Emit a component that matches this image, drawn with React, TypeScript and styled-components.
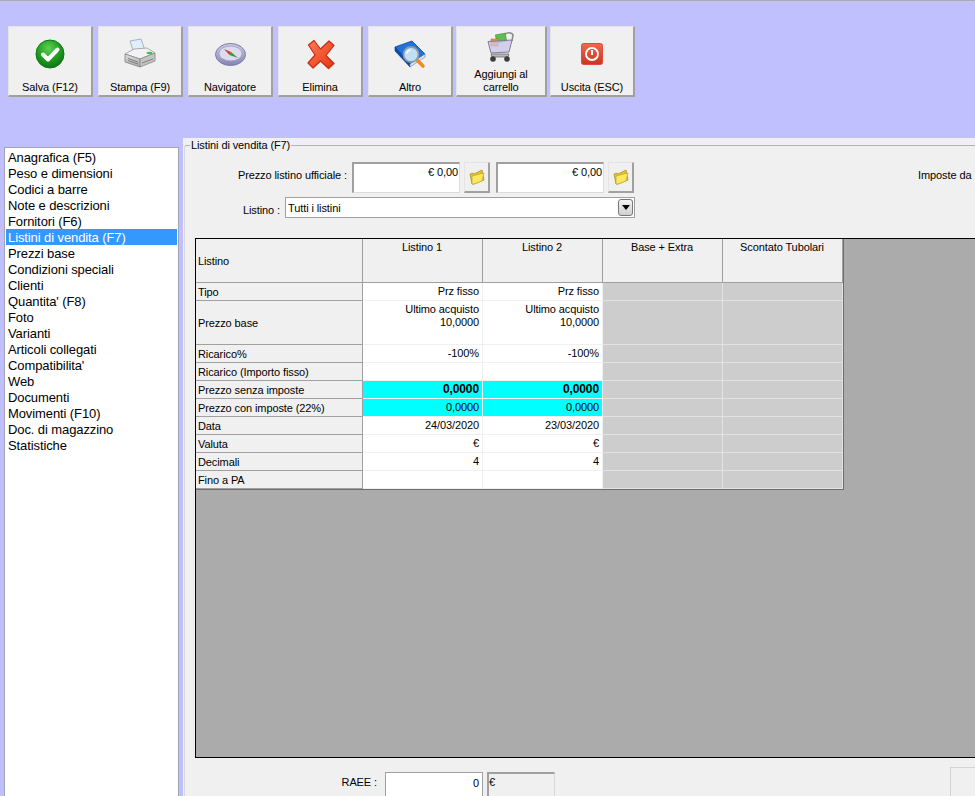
import React from "react";
import styled, { createGlobalStyle } from "styled-components";

const GlobalStyle = createGlobalStyle`
    html, body {
        margin: 0;
        padding: 0;
        background: #c0c0ff;
    }
    body {
        font-family: "Liberation Sans", Arial, sans-serif;
        font-size: 11px;
        letter-spacing: -0.1px;
        color: #000;
    }
`

const Wrapper = styled.div`
    width: 975px;
    height: 796px;
    display: flex;
    flex-direction: column;
    overflow: hidden;
    background: #c0c0ff;
    border-top: 1px solid #a9a9b4;
    box-sizing: border-box;
`
const Toolbar = styled.div`
    flex: none;
    height: 137px;
    box-sizing: border-box;
    padding: 25px 0 0 8px;
    display: flex;
    align-items: flex-start;
`
const ToolButton = styled.div<{ $width: number; $gap: number }>`
    width: ${(p) => p.$width}px;
    height: 71px;
    margin-right: ${(p) => p.$gap}px;
    box-sizing: border-box;
    display: flex;
    flex-direction: column;
    align-items: center;
    padding-bottom: 1px;
    background: #f0f0f0;
    border: 1px solid #e4e4e4;
    border-right: 2px solid #a0a0a0;
    border-bottom: 2px solid #a0a0a0;
    line-height: 13px;
    text-align: center;
`
const ToolIcon = styled.div`
    flex: 1;
    display: flex;
    align-items: center;
    justify-content: center;
`
const ToolLabel = styled.div`
    white-space: pre-line;
`
const Body = styled.div`
    flex: 1;
    min-height: 0;
    display: flex;
    padding-left: 4px;
`
const SideList = styled.div`
    flex: none;
    width: 175px;
    margin: 9px 4px 0 0;
    padding: 1px 1px 0;
    box-sizing: border-box;
    background: #fff;
    border: 1px solid #a3a3b8;
    border-bottom: none;
    font-size: 13px;
    letter-spacing: -0.1px;
`
const SideItem = styled.div<{ $active?: boolean }>`
    height: 16px;
    line-height: 17px;
    padding-left: 2px;
    white-space: nowrap;
    background: ${(p) => (p.$active ? "#3399ff" : "transparent")};
    color: ${(p) => (p.$active ? "#fff" : "#000")};
`
const Panel = styled.div`
    flex: 1;
    min-width: 0;
    background: #f0f0f0;
    overflow: hidden;
`
const Group = styled.fieldset`
    margin: 0 0 0 1px;
    padding: 0;
    min-width: 0;
    width: 900px;
    height: 658px;
    box-sizing: border-box;
    border: none;
    border-top: 1px solid #b4b4b4;
    border-left: 1px solid #d8d8d8;
    border-top-left-radius: 3px;
`
const GroupTitle = styled.legend`
    margin-left: 5px;
    padding: 0 1px;
    height: 14px;
    line-height: 14px;
`
const FieldRow = styled.div<{ $top: number }>`
    display: flex;
    align-items: flex-start;
    margin-top: ${(p) => p.$top}px;
`
const FieldLabel = styled.div<{ $width: number; $top: number }>`
    flex: none;
    width: ${(p) => p.$width}px;
    margin: ${(p) => p.$top}px 5px 0 0;
    text-align: right;
    white-space: nowrap;
    line-height: 14px;
`
const SunkenInput = styled.div`
    flex: none;
    width: 108px;
    height: 31px;
    box-sizing: border-box;
    padding: 1px 1px 0 0;
    background: #fff;
    border: 1px solid #dcdcdc;
    border-top: 2px solid #a0a0a0;
    border-left: 2px solid #a0a0a0;
    text-align: right;
    line-height: 14px;
`
const FolderButton = styled.div`
    flex: none;
    width: 26px;
    height: 31px;
    margin: 0 6px 0 4px;
    box-sizing: border-box;
    display: flex;
    align-items: center;
    justify-content: center;
    border: 1px solid #e4e4e4;
    border-right: 2px solid #a0a0a0;
    border-bottom: 2px solid #a0a0a0;
`
const Tax = styled.div`
    flex: none;
    margin: 6px 0 0 278px;
    white-space: nowrap;
    line-height: 14px;
`
const Select = styled.div`
    flex: none;
    width: 350px;
    height: 21px;
    box-sizing: border-box;
    display: flex;
    align-items: center;
    justify-content: space-between;
    padding: 0 1px 0 2px;
    background: #fff;
    border: 1px solid #a0a0a0;
`
const SelectArrow = styled.div`
    width: 15px;
    height: 17px;
    box-sizing: border-box;
    display: flex;
    align-items: center;
    justify-content: center;
    background: linear-gradient(#f4f4f4, #cfcfcf);
    border: 1px solid #777;
    border-radius: 3px;
    &::after {
        content: "";
        border-left: 4px solid transparent;
        border-right: 4px solid transparent;
        border-top: 5px solid #000;
    }
`
const SheetArea = styled.div`
    width: 790px;
    height: 520px;
    margin: 20px 0 0 10px;
    box-sizing: border-box;
    background: #ababab;
    border: 1px solid #000;
`
const Sheet = styled.div`
    display: inline-grid;
    grid-template-columns: 167px 120px 120px 120px 120px;
    grid-template-rows: 44px 18px 44px repeat(8, 18px);
    background: #f0f0f0;
    border-bottom: 1px solid #6e6e6e;
    border-right: 1px solid #6e6e6e;
`
const Cell = styled.div<{ $kind: "head" | "label" | "data" | "cyan" | "off"; $bold?: boolean }>`
    box-sizing: border-box;
    padding: 0 3px 0 2px;
    line-height: 13px;
    white-space: pre-line;
    overflow: hidden;
    font-weight: ${(p) => (p.$bold ? 700 : 400)};
    font-size: ${(p) => (p.$bold ? "12px" : "11px")};
    ${(p) => {
        switch (p.$kind) {
            case "head":
                return `background:#f0f0f0;border-right:1px solid #a0a0a0;border-bottom:1px solid #a0a0a0;text-align:center;padding-top:2px;`
            case "label":
                return `background:#f0f0f0;border-right:1px solid #a0a0a0;border-bottom:1px solid #a0a0a0;display:flex;align-items:center;padding-top:2px;`
            case "cyan":
                return `background:#00ffff;border-right:1px solid #f0f0f0;border-bottom:1px solid #f0f0f0;text-align:right;padding-top:2px;`
            case "off":
                return `background:#cdcdcd;border-right:1px solid #e2e2e2;border-bottom:1px solid #e2e2e2;`
            default:
                return `background:#fff;border-right:1px solid #f0f0f0;border-bottom:1px solid #f0f0f0;text-align:right;padding-top:2px;`
        }
    }}
`
const BottomRow = styled.div`
    display: flex;
    align-items: flex-start;
    margin-top: 14px;
    height: 30px;
`
const RaeeLabel = styled.div`
    flex: none;
    width: 192px;
    margin: 3px 8px 0 0;
    text-align: right;
    line-height: 14px;
`
const RaeeValue = styled.div`
    flex: none;
    width: 98px;
    height: 30px;
    box-sizing: border-box;
    padding: 3px 3px 0 0;
    background: #fff;
    border: 1px solid #a0a0a0;
    text-align: right;
    line-height: 14px;
`
const RaeeUnit = styled.div`
    flex: none;
    width: 68px;
    height: 30px;
    margin-left: 4px;
    box-sizing: border-box;
    padding: 1px 0 0 0;
    border: 1px solid #d8d8d8;
    border-top: 2px solid #a0a0a0;
    border-left: 2px solid #a0a0a0;
    line-height: 14px;
`
const CornerBox = styled.div`
    flex: none;
    width: 40px;
    height: 30px;
    margin: -5px 0 0 395px;
    box-sizing: border-box;
    border: 1px solid #d4d4d4;
`

const SaveIcon = () => (
    <svg width="30" height="30" viewBox="0 0 30 30">
        <defs>
            <radialGradient id="sv" cx="45%" cy="30%" r="75%">
                <stop offset="0" stopColor="#5fd052" />
                <stop offset="0.55" stopColor="#1f9d1f" />
                <stop offset="1" stopColor="#0b6f10" />
            </radialGradient>
        </defs>
        <circle cx="15" cy="15" r="14" fill="url(#sv)" stroke="#0d7a14" />
        <path d="M8 15.5l5 5 9.5-10" fill="none" stroke="#fff" strokeWidth="4" strokeLinecap="round" strokeLinejoin="round" />
    </svg>
)
const PrintIcon = () => (
    <svg width="40" height="36" viewBox="0 0 40 36">
        <defs>
            <linearGradient id="pr" x1="0" y1="0" x2="0" y2="1">
                <stop offset="0" stopColor="#dedede" />
                <stop offset="1" stopColor="#a9a9a9" />
            </linearGradient>
        </defs>
        <path d="M10 5L21 3l3.500 10L14 17z" fill="#e3eefb" stroke="#8ea6c4" strokeWidth="0.8" />
        <path d="M5 18l9-5 13-1 8 5-15 6z" fill="#f2f2f2" stroke="#999" strokeWidth="0.8" />
        <path d="M5 18l15 5v8L5 26z" fill="url(#pr)" stroke="#858585" strokeWidth="0.8" />
        <path d="M20 23l15-6v8l-15 6z" fill="#c4c4c4" stroke="#858585" strokeWidth="0.8" />
        <path d="M8 22.500l10 3.500M8 24.500l10 3.500M22 27l11-4" stroke="#6f6f6f" strokeWidth="0.8" fill="none" />
        <ellipse cx="29.500" cy="17" rx="3" ry="1.300" fill="#43c047" />
    </svg>
)
const CompassIcon = () => (
    <svg width="31" height="23" viewBox="0 0 31 23">
        <defs>
            <linearGradient id="cp" x1="0" y1="0" x2="0" y2="1">
                <stop offset="0" stopColor="#cfcfe8" />
                <stop offset="1" stopColor="#8484b4" />
            </linearGradient>
        </defs>
        <ellipse cx="15.500" cy="11.500" rx="15" ry="11" fill="url(#cp)" stroke="#7a7aa5" />
        <ellipse cx="15.500" cy="10.500" rx="11.500" ry="7.500" fill="#dcdcee" stroke="#9090b8" strokeWidth="0.7" />
        <path d="M9 6l7 3-1.500 3z" fill="#d93a22" />
        <path d="M16 9l7 6-8.500-3z" fill="#2f9a3a" />
    </svg>
)
const DeleteIcon = () => (
    <svg width="40" height="36" viewBox="0 0 40 36">
        <defs>
            <linearGradient id="dl" x1="0" y1="0" x2="1" y2="1">
                <stop offset="0" stopColor="#ff7e58" />
                <stop offset="1" stopColor="#e6320f" />
            </linearGradient>
        </defs>
        <path
            d="M8.500 9L14 4.500 20.500 13 29 5l5 4.500-8 10 8 8-5.500 5-8-7.500-7.500 7-5-5 7-8z"
            fill="url(#dl)"
            stroke="#c62c10"
            strokeWidth="1.200"
            strokeLinejoin="round"
        />
    </svg>
)
const BookIcon = () => (
    <svg width="40" height="36" viewBox="0 2 40 36">
        <path d="M5 13l17-6 13 13-15 10z" fill="#1f74dc" stroke="#12439a" strokeWidth="0.8" />
        <path d="M5 13l15 17v3L5 17z" fill="#0e4cae" stroke="#0d3a85" strokeWidth="0.6" />
        <path d="M20 30l15-10v3L20 33z" fill="#dfe8f5" stroke="#5a7ab0" strokeWidth="0.6" />
        <path d="M27 26l6 6" stroke="#f08a24" strokeWidth="3.600" strokeLinecap="round" />
        <circle cx="21" cy="20.500" r="7.500" fill="#bfe0f5" stroke="#8b9aa8" strokeWidth="1.800" />
        <path d="M16.500 19.500a5 5 0 0 1 4-3.500" stroke="#fff" strokeWidth="1.400" fill="none" />
    </svg>
)
const CartIcon = () => (
    <svg width="40" height="36" viewBox="2 2 40 36">
        <path d="M25 7c2-3 8-3 9 0l-1 6" fill="none" stroke="#8c8c8c" strokeWidth="1.600" />
        <rect x="17" y="6" width="10" height="8" fill="#5cc04a" stroke="#3f8f33" strokeWidth="0.6" transform="rotate(-10 22 10)" />
        <rect x="12" y="11" width="7" height="7" fill="#ef9440" stroke="#c96f20" strokeWidth="0.6" />
        <path d="M9 13.500l24-1.500-3 12-18 1z" fill="#c9c4ea" fillOpacity="0.75" stroke="#7d7a9c" />
        <path d="M12 26h18l-1 3H13z" fill="#b8b8b8" stroke="#6f6f6f" strokeWidth="0.8" />
        <circle cx="14" cy="31" r="2.800" fill="#3d3d3d" />
        <circle cx="28" cy="31" r="2.800" fill="#3d3d3d" />
    </svg>
)
const ExitIcon = () => (
    <svg width="22" height="22" viewBox="0 0 22 22">
        <defs>
            <linearGradient id="ex" x1="0" y1="0" x2="0" y2="1">
                <stop offset="0" stopColor="#ee6a50" />
                <stop offset="1" stopColor="#c9351f" />
            </linearGradient>
        </defs>
        <rect x="0.500" y="0.500" width="21" height="21" rx="2" fill="url(#ex)" stroke="#d9503a" />
        <circle cx="11" cy="11" r="6" fill="none" stroke="#fff" strokeWidth="1.800" />
        <path d="M11 7v5" stroke="#fff" strokeWidth="2" />
    </svg>
)
const FolderIcon = () => (
    <svg width="16" height="16" viewBox="0 0 16 16">
        <path d="M1 5l3-1 1 1 8-4 2 10-10 4H3z" fill="#e6c22e" stroke="#a38a1e" strokeWidth="0.7" />
        <path d="M3 7l12-3-2 8-8 3H3z" fill="#fde95f" stroke="#b39c22" strokeWidth="0.6" />
    </svg>
)

const toolButtons = [
    { label: "Salva (F12)", width: 85, gap: 5, icon: <SaveIcon /> },
    { label: "Stampa (F9)", width: 85, gap: 5, icon: <PrintIcon /> },
    { label: "Navigatore", width: 85, gap: 5, icon: <CompassIcon /> },
    { label: "Elimina", width: 85, gap: 5, icon: <DeleteIcon /> },
    { label: "Altro", width: 85, gap: 3, icon: <BookIcon /> },
    { label: "Aggiungi al\ncarrello", width: 91, gap: 3, icon: <CartIcon /> },
    { label: "Uscita (ESC)", width: 85, gap: 0, icon: <ExitIcon /> },
]

const sections = [
    "Anagrafica (F5)",
    "Peso e dimensioni",
    "Codici a barre",
    "Note e descrizioni",
    "Fornitori (F6)",
    "Listini di vendita (F7)",
    "Prezzi base",
    "Condizioni speciali",
    "Clienti",
    "Quantita' (F8)",
    "Foto",
    "Varianti",
    "Articoli collegati",
    "Compatibilita'",
    "Web",
    "Documenti",
    "Movimenti (F10)",
    "Doc. di magazzino",
    "Statistiche",
]

const rows: { label: string; a: string; b: string; cyan?: boolean; bold?: boolean }[] = [
    { label: "Tipo", a: "Prz fisso", b: "Prz fisso" },
    { label: "Prezzo base", a: "Ultimo acquisto\n10,0000", b: "Ultimo acquisto\n10,0000" },
    { label: "Ricarico%", a: "-100%", b: "-100%" },
    { label: "Ricarico (Importo fisso)", a: "", b: "" },
    { label: "Prezzo senza imposte", a: "0,0000", b: "0,0000", cyan: true, bold: true },
    { label: "Prezzo con imposte (22%)", a: "0,0000", b: "0,0000", cyan: true },
    { label: "Data", a: "24/03/2020", b: "23/03/2020" },
    { label: "Valuta", a: "€", b: "€" },
    { label: "Decimali", a: "4", b: "4" },
    { label: "Fino a PA", a: "", b: "" },
]

const App = () => {
    return (
        <Wrapper>
            <GlobalStyle />
            <Toolbar>
                {toolButtons.map((b) => (
                    <ToolButton key={b.label} $width={b.width} $gap={b.gap}>
                        <ToolIcon>{b.icon}</ToolIcon>
                        <ToolLabel>{b.label}</ToolLabel>
                    </ToolButton>
                ))}
            </Toolbar>
            <Body>
                <SideList>
                    {sections.map((s) => (
                        <SideItem key={s} $active={s === "Listini di vendita (F7)"}>
                            {s}
                        </SideItem>
                    ))}
                </SideList>
                <Panel>
                    <Group>
                        <GroupTitle>Listini di vendita (F7)</GroupTitle>
                        <FieldRow $top={10}>
                            <FieldLabel $width={162} $top={6}>Prezzo listino ufficiale :</FieldLabel>
                            <SunkenInput>€ 0,00</SunkenInput>
                            <FolderButton><FolderIcon /></FolderButton>
                            <SunkenInput>€ 0,00</SunkenInput>
                            <FolderButton><FolderIcon /></FolderButton>
                            <Tax>Imposte da</Tax>
                        </FieldRow>
                        <FieldRow $top={4}>
                            <FieldLabel $width={95} $top={6}>Listino :</FieldLabel>
                            <Select>
                                Tutti i listini
                                <SelectArrow />
                            </Select>
                        </FieldRow>
                        <SheetArea>
                            <Sheet>
                                <Cell $kind="label">Listino</Cell>
                                <Cell $kind="head">Listino 1</Cell>
                                <Cell $kind="head">Listino 2</Cell>
                                <Cell $kind="head">Base + Extra</Cell>
                                <Cell $kind="head">Scontato Tubolari</Cell>
                                {rows.map((r) => (
                                    <React.Fragment key={r.label}>
                                        <Cell $kind="label">{r.label}</Cell>
                                        <Cell $kind={r.cyan ? "cyan" : "data"} $bold={r.bold}>{r.a}</Cell>
                                        <Cell $kind={r.cyan ? "cyan" : "data"} $bold={r.bold}>{r.b}</Cell>
                                        <Cell $kind="off" />
                                        <Cell $kind="off" />
                                    </React.Fragment>
                                ))}
                            </Sheet>
                        </SheetArea>
                        <BottomRow>
                            <RaeeLabel>RAEE :</RaeeLabel>
                            <RaeeValue>0</RaeeValue>
                            <RaeeUnit>€</RaeeUnit>
                            <CornerBox />
                        </BottomRow>
                    </Group>
                </Panel>
            </Body>
        </Wrapper>
    );
};
export default App
